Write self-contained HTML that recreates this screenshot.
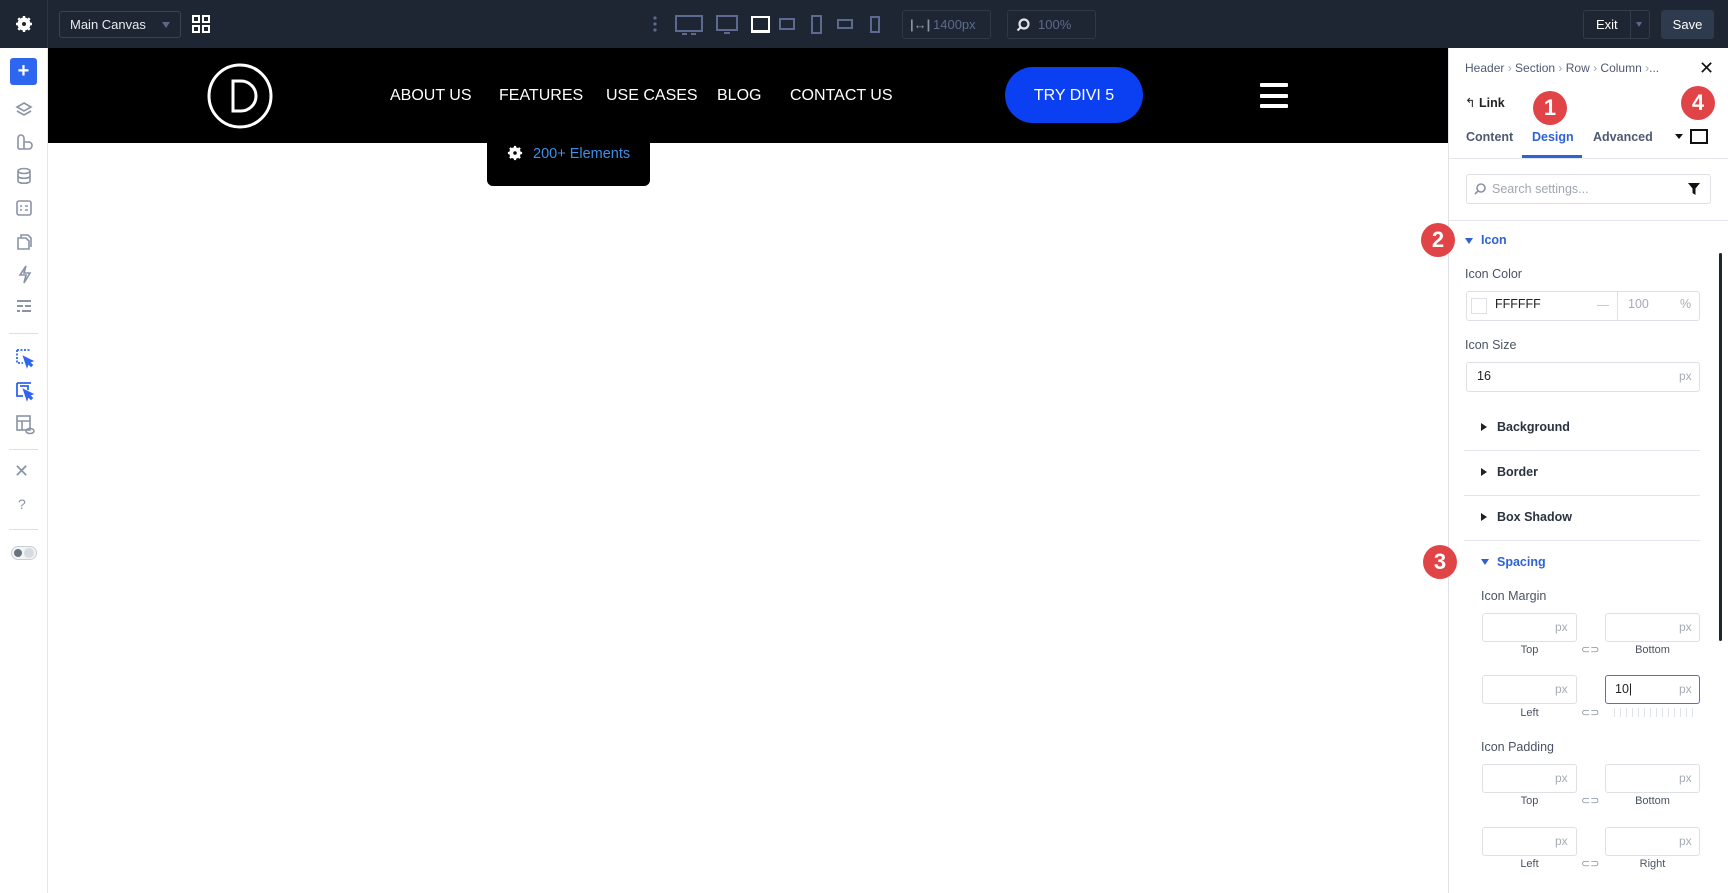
<!DOCTYPE html>
<html><head><meta charset="utf-8"><style>
*{box-sizing:border-box;margin:0;padding:0}
body{width:1728px;height:893px;overflow:hidden;background:#fff;font-family:"Liberation Sans",sans-serif;position:relative}
.a{position:absolute}
.top{left:0;top:0;width:1728px;height:48px;background:#1f2633}
.side{left:0;top:48px;width:48px;height:845px;background:#fff;border-right:1px solid #e3e6ea}
.hdr{left:48px;top:48px;width:1400px;height:95px;background:#000}
.nav{color:#fff;font-size:16px;top:87px;letter-spacing:0}
.panel{left:1448px;top:48px;width:280px;height:845px;background:#fff;border-left:1px solid #dfe2e6}
.badge{width:34px;height:34px;border-radius:50%;background:#e04446;color:#fff;font-weight:bold;font-size:22px;text-align:center;line-height:34px}
.lbl{font-size:12.5px;color:#4a5363}
.inp{border:1px solid #dde0e5;border-radius:3px;background:#fff;height:29px}
.px{font-size:12px;color:#a6abb5}
.sub{font-size:11px;color:#4a5363;text-align:center;width:95px}
.sec{font-size:12.5px;font-weight:bold;color:#2b3240}
.line{height:1px;background:#e3e6ea}
.tri{width:0;height:0;border-top:4px solid transparent;border-bottom:4px solid transparent;border-left:6px solid #222}
.trid{width:0;height:0;border-left:4px solid transparent;border-right:4px solid transparent;border-top:6px solid #2f5fd0}
.ic{stroke:#8a93a6;fill:none;stroke-width:1.6}
</style></head><body>
<div class="a top"></div>
<div class="a" style="left:47px;top:0;width:1px;height:48px;background:#2c3444"></div>
<svg class="a" style="left:15px;top:15px" width="18" height="18" viewBox="0 0 18 18"><circle cx="9" cy="9" r="5" fill="none" stroke="#fff" stroke-width="3"/><g stroke="#fff" stroke-width="2.5"><line x1="9" y1="1" x2="9" y2="17"/><line x1="1" y1="9" x2="17" y2="9"/><line x1="3.3" y1="3.3" x2="14.7" y2="14.7"/><line x1="14.7" y1="3.3" x2="3.3" y2="14.7"/></g><circle cx="9" cy="9" r="2" fill="#1f2633"/></svg>
<div class="a" style="left:59px;top:11px;width:122px;height:27px;border:1px solid #3a4354;border-radius:3px;color:#e6e9ee;font-size:13px;line-height:25px;padding-left:10px">Main Canvas<span style="position:absolute;right:10px;top:10px;border-left:4px solid transparent;border-right:4px solid transparent;border-top:6px solid #5c6888"></span></div>
<svg class="a" style="left:192px;top:15px" width="18" height="18"><g fill="none" stroke="#fff" stroke-width="2"><rect x="1" y="1" width="6" height="6"/><rect x="11" y="1" width="6" height="6"/><rect x="1" y="11" width="6" height="6"/><rect x="11" y="11" width="6" height="6"/></g></svg>
<svg class="a" style="left:650px;top:12px" width="230" height="24"><g fill="#5b6a8e"><circle cx="5" cy="6" r="1.6"/><circle cx="5" cy="12" r="1.6"/><circle cx="5" cy="18" r="1.6"/></g><g fill="none" stroke="#5b6a8e" stroke-width="2"><rect x="26" y="4" width="26" height="15"/><rect x="67" y="4" width="20" height="14"/><rect x="130" y="7" width="14" height="10"/><rect x="162" y="4" width="9" height="17"/><rect x="188" y="8" width="14" height="8"/><rect x="221" y="5" width="8" height="15"/></g><g stroke="#5b6a8e" stroke-width="2"><line x1="32" y1="22" x2="37" y2="22"/><line x1="41" y1="22" x2="46" y2="22"/><line x1="74" y1="21" x2="80" y2="21"/></g><rect x="102" y="5" width="17" height="14" fill="none" stroke="#fff" stroke-width="2"/><line x1="101" y1="20" x2="120" y2="20" stroke="#fff" stroke-width="2"/></svg>
<div class="a" style="left:902px;top:10px;width:89px;height:29px;border:1px solid #2f3848;border-radius:3px;color:#5b6a8e;font-size:13px;line-height:27px;padding-left:30px">1400px<span style="position:absolute;left:7px;top:0;font-weight:bold;color:#8a93a6">|↔|</span></div>
<div class="a" style="left:1007px;top:10px;width:89px;height:29px;border:1px solid #2f3848;border-radius:3px;color:#5b6a8e;font-size:13px;line-height:27px;padding-left:30px">100%<svg style="position:absolute;left:8px;top:7px" width="14" height="14"><circle cx="8" cy="6" r="4.5" fill="none" stroke="#dfe3ea" stroke-width="2.2"/><line x1="5" y1="9" x2="1.5" y2="12.5" stroke="#dfe3ea" stroke-width="2.2"/></svg></div>
<div class="a" style="left:1583px;top:10px;width:67px;height:29px;border:1px solid #333c4c;border-radius:3px;color:#fff;font-size:13px;line-height:27px;padding-left:12px">Exit<span style="position:absolute;left:46px;top:0;width:1px;height:27px;background:#333c4c"></span><span style="position:absolute;right:7px;top:11px;border-left:3px solid transparent;border-right:3px solid transparent;border-top:5px solid #5c6888"></span></div>
<div class="a" style="left:1661px;top:10px;width:53px;height:29px;background:#2e3a4d;border-radius:3px;color:#fff;font-size:13px;line-height:29px;text-align:center">Save</div>

<div class="a side"></div>
<div class="a" style="left:10px;top:58px;width:27px;height:27px;background:#2e66f0;border-radius:3px;color:#fff;font-size:20px;line-height:26px;text-align:center;font-weight:bold">+</div>
<svg class="a" style="left:14px;top:99px" width="20" height="220"><g class="ic">
<g transform="translate(0,3)"><path d="M10 1l7 4-7 4-7-4z M3 9l7 4 7-4"/></g>
<g transform="translate(0,36)"><path d="M4 13V3a3 3 0 016 0v11H6a2 2 0 01-2-1z M10 14h5a3.5 3.5 0 00-1-7h-4"/></g>
<g transform="translate(0,69)"><ellipse cx="10" cy="3" rx="6" ry="2.5"/><path d="M4 3v10c0 3 12 3 12 0V3 M4 8c0 3 12 3 12 0"/></g>
<g transform="translate(0,102)"><rect x="3" y="0" width="14" height="14" rx="2"/><path d="M6 5h2 M11 5h3 M6 9h2 M11 9h3"/></g>
<g transform="translate(0,135)"><path d="M4 4h8l3 3v8H4z M7 4V1h7l3 3v9"/></g>
<g transform="translate(0,167)"><path d="M12 0l-6 9h6l-2 8 6-10h-6z"/></g>
</g><g stroke="#8a93a6" stroke-width="2" transform="translate(0,202)"><line x1="3" y1="0" x2="17" y2="0"/><line x1="3" y1="5" x2="9" y2="5"/><line x1="11" y1="5" x2="17" y2="5"/><line x1="3" y1="10" x2="6" y2="10"/><line x1="8" y1="10" x2="17" y2="10"/></g></svg>
<div class="a" style="left:9px;top:333px;width:29px;height:1px;background:#dcdfe4"></div>
<svg class="a" style="left:14px;top:347px" width="22" height="90"><g fill="none" stroke="#2e66f0" stroke-width="1.8"><path d="M3 3h14M3 3v13h6" stroke-dasharray="2 1.5"/><path d="M10 10l8 4-3 1 3 3-1 1-3-3-1 3z" fill="#2e66f0"/><path d="M3 36h14M3 36v13h6M6 39h8v4"/><path d="M10 43l8 4-3 1 3 3-1 1-3-3-1 3z" fill="#2e66f0"/></g><g fill="none" stroke="#8a93a6" stroke-width="1.6"><rect x="3" y="69" width="13" height="14"/><path d="M3 74h13M8 74v9"/><ellipse cx="16" cy="84" rx="4" ry="2.5"/></g></svg>
<div class="a" style="left:9px;top:449px;width:29px;height:1px;background:#dcdfe4"></div>
<div class="a" style="left:14px;top:461px;color:#8a93a6;font-size:18px">✕</div>
<div class="a" style="left:18px;top:496px;color:#8a93a6;font-size:14px">?</div>
<div class="a" style="left:9px;top:529px;width:29px;height:1px;background:#dcdfe4"></div>
<div class="a" style="left:11px;top:546px;width:26px;height:14px;border-radius:7px;border:1px solid #c9ced6;background:#f3f4f6"><span style="position:absolute;left:2px;top:2px;width:8px;height:8px;border-radius:50%;background:#6b7280"></span><span style="position:absolute;right:2px;top:1px;width:10px;height:10px;border-radius:50%;background:#d7dbe1"></span></div>

<div class="a hdr"></div>
<svg class="a" style="left:206px;top:62px" width="68" height="68"><circle cx="34" cy="34" r="31" fill="none" stroke="#fff" stroke-width="3"/><path d="M27 19h8a15 15 0 010 30h-8z" fill="none" stroke="#fff" stroke-width="3"/></svg>
<div class="a nav" style="left:390px">ABOUT US</div>
<div class="a nav" style="left:499px">FEATURES</div>
<div class="a nav" style="left:606px">USE CASES</div>
<div class="a nav" style="left:717px">BLOG</div>
<div class="a nav" style="left:790px">CONTACT US</div>
<div class="a" style="left:1005px;top:67px;width:138px;height:56px;border-radius:28px;background:#0a3ff2;color:#fff;font-size:16px;line-height:58px;text-align:center">TRY DIVI 5</div>
<div class="a" style="left:1260px;top:83px;width:28px;height:4px;background:#fff;border-radius:1px"></div>
<div class="a" style="left:1260px;top:94px;width:28px;height:4px;background:#fff;border-radius:1px"></div>
<div class="a" style="left:1260px;top:104px;width:28px;height:4px;background:#fff;border-radius:1px"></div>
<div class="a" style="left:487px;top:140px;width:163px;height:46px;background:#000;border-radius:0 0 6px 6px"></div>
<svg class="a" style="left:507px;top:145px" width="16" height="16" viewBox="0 0 18 18"><circle cx="9" cy="9" r="5" fill="none" stroke="#fff" stroke-width="3"/><g stroke="#fff" stroke-width="2.5"><line x1="9" y1="1" x2="9" y2="17"/><line x1="1" y1="9" x2="17" y2="9"/><line x1="3.3" y1="3.3" x2="14.7" y2="14.7"/><line x1="14.7" y1="3.3" x2="3.3" y2="14.7"/></g><circle cx="9" cy="9" r="2" fill="#000"/></svg>
<div class="a" style="left:533px;top:146px;color:#3d8fe8;font-size:14.5px">200+ Elements</div>

<div class="a panel"></div>
<div class="a" style="left:1465px;top:61px;font-size:12px;color:#4e5a72">Header <span style="color:#9aa">›</span> Section <span style="color:#9aa">›</span> Row <span style="color:#9aa">›</span> Column <span style="color:#9aa">›</span>...</div>
<div class="a" style="left:1699px;top:58px;font-size:18px;color:#111">✕</div>
<div class="a" style="left:1465px;top:95px;font-size:12.5px;color:#222;font-weight:bold"><span style="font-weight:normal">↰</span> Link</div>
<div class="a" style="left:1466px;top:130px;font-size:12.5px;color:#4e5a72;font-weight:bold">Content</div>
<div class="a" style="left:1532px;top:130px;font-size:12.5px;color:#2e63d6;font-weight:bold">Design</div>
<div class="a" style="left:1593px;top:130px;font-size:12.5px;color:#4e5a72;font-weight:bold">Advanced</div>
<div class="a" style="left:1448px;top:158px;width:280px;height:1px;background:#e3e6ea"></div>
<div class="a" style="left:1522px;top:155px;width:60px;height:3px;background:#2e63d6"></div>
<div class="a" style="left:1675px;top:134px;border-left:4px solid transparent;border-right:4px solid transparent;border-top:5px solid #111"></div>
<div class="a" style="left:1690px;top:129px;width:18px;height:15px;border:2px solid #111"></div>
<div class="a badge" style="left:1533px;top:91px">1</div>
<div class="a badge" style="left:1681px;top:86px">4</div>
<div class="a inp" style="left:1466px;top:174px;width:245px;height:30px"></div>
<svg class="a" style="left:1474px;top:183px" width="12" height="12"><circle cx="7" cy="5" r="4" fill="none" stroke="#8a93a6" stroke-width="1.6"/><line x1="4" y1="8" x2="1" y2="11" stroke="#8a93a6" stroke-width="1.6"/></svg>
<div class="a" style="left:1492px;top:182px;font-size:12.5px;color:#a0a6b1">Search settings...</div>
<svg class="a" style="left:1688px;top:183px" width="12" height="12"><path d="M0 0h12l-4.5 5.5V12l-3-2V5.5z" fill="#111"/></svg>
<div class="a" style="left:1448px;top:220px;width:280px;height:1px;background:#e3e6ea"></div>
<div class="a badge" style="left:1421px;top:223px">2</div>
<div class="a trid" style="left:1465px;top:238px"></div>
<div class="a" style="left:1481px;top:233px;font-size:12.5px;color:#2e63d6;font-weight:bold">Icon</div>
<div class="a" style="left:1719px;top:253px;width:3px;height:388px;background:#1f2633;border-radius:2px"></div>
<div class="a lbl" style="left:1465px;top:267px">Icon Color</div>
<div class="a inp" style="left:1466px;top:291px;width:234px;height:30px"></div>
<div class="a" style="left:1471px;top:298px;width:16px;height:16px;border:1px solid #dde0e5"></div>
<div class="a" style="left:1495px;top:297px;font-size:12.5px;color:#222">FFFFFF</div>
<div class="a" style="left:1597px;top:305px;width:12px;height:1px;background:#c6cad1"></div>
<div class="a" style="left:1617px;top:292px;width:1px;height:28px;background:#dde0e5"></div>
<div class="a px" style="left:1628px;top:297px;font-size:12.5px">100</div>
<div class="a px" style="left:1680px;top:297px;font-size:12.5px">%</div>
<div class="a lbl" style="left:1465px;top:338px">Icon Size</div>
<div class="a inp" style="left:1466px;top:362px;width:234px;height:30px"></div>
<div class="a" style="left:1477px;top:369px;font-size:12.5px;color:#222">16</div>
<div class="a px" style="left:1679px;top:369px">px</div>
<div class="a tri" style="left:1481px;top:423px"></div>
<div class="a sec" style="left:1497px;top:420px">Background</div>
<div class="a line" style="left:1464px;top:450px;width:236px"></div>
<div class="a tri" style="left:1481px;top:468px"></div>
<div class="a sec" style="left:1497px;top:465px">Border</div>
<div class="a line" style="left:1464px;top:495px;width:236px"></div>
<div class="a tri" style="left:1481px;top:513px"></div>
<div class="a sec" style="left:1497px;top:510px">Box Shadow</div>
<div class="a line" style="left:1464px;top:540px;width:236px"></div>
<div class="a badge" style="left:1423px;top:545px">3</div>
<div class="a trid" style="left:1481px;top:559px"></div>
<div class="a" style="left:1497px;top:555px;font-size:12.5px;color:#2e63d6;font-weight:bold">Spacing</div>
<div class="a lbl" style="left:1481px;top:589px">Icon Margin</div>
<div class="a lbl" style="left:1481px;top:740px">Icon Padding</div>

<div class="a inp" style="left:1482px;top:613px;width:95px"></div><div class="a px" style="left:1555px;top:620px">px</div>
<div class="a inp" style="left:1605px;top:613px;width:95px"></div><div class="a px" style="left:1679px;top:620px">px</div>
<div class="a sub" style="left:1482px;top:644px">Top</div><div class="a sub" style="left:1605px;top:644px">Bottom</div>
<div class="a" style="left:1581px;top:643px;font-size:11px;color:#8a93a6">⊂⊃</div>
<div class="a inp" style="left:1482px;top:675px;width:95px"></div><div class="a px" style="left:1555px;top:682px">px</div>
<div class="a inp" style="left:1605px;top:675px;width:95px;border-color:#4c74c9"></div><div class="a" style="left:1615px;top:682px;font-size:12.5px;color:#222">10|</div><div class="a px" style="left:1679px;top:682px">px</div>
<div class="a sub" style="left:1482px;top:707px">Left</div>
<div class="a" style="left:1581px;top:706px;font-size:11px;color:#8a93a6">⊂⊃</div>
<div class="a" style="left:1614px;top:708px;width:82px;height:9px;background:repeating-linear-gradient(90deg,#dfe2e7 0 1px,transparent 1px 6px)"></div>
<div class="a inp" style="left:1482px;top:764px;width:95px"></div><div class="a px" style="left:1555px;top:771px">px</div>
<div class="a inp" style="left:1605px;top:764px;width:95px"></div><div class="a px" style="left:1679px;top:771px">px</div>
<div class="a sub" style="left:1482px;top:795px">Top</div><div class="a sub" style="left:1605px;top:795px">Bottom</div>
<div class="a" style="left:1581px;top:794px;font-size:11px;color:#8a93a6">⊂⊃</div>
<div class="a inp" style="left:1482px;top:827px;width:95px"></div><div class="a px" style="left:1555px;top:834px">px</div>
<div class="a inp" style="left:1605px;top:827px;width:95px"></div><div class="a px" style="left:1679px;top:834px">px</div>
<div class="a sub" style="left:1482px;top:858px">Left</div><div class="a sub" style="left:1605px;top:858px">Right</div>
<div class="a" style="left:1581px;top:857px;font-size:11px;color:#8a93a6">⊂⊃</div>
</body></html>
